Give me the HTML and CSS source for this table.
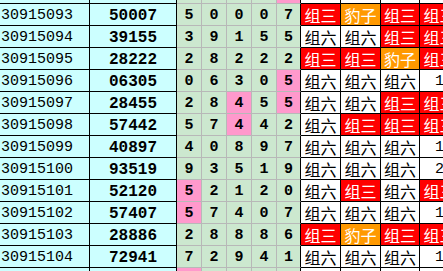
FILE: index.html
```html
<!DOCTYPE html>
<html lang="zh">
<head>
<meta charset="utf-8">
<link rel="stylesheet" href="styles.css">
</head>
<body>
<div class="sheet">
  <div class="row">
    <div class="c id"></div><div class="c sum"></div>
    <div class="c d"></div><div class="c d"></div><div class="c d"></div><div class="c d"></div><div class="c d d5 hit"></div>
    <div class="c g"></div><div class="c g"></div><div class="c g g3w"></div><div class="c g"></div>
  </div>
  <div class="row">
    <div class="c id">30915093</div><div class="c sum">50007</div>
    <div class="c d">5</div><div class="c d">0</div><div class="c d">0</div><div class="c d">0</div><div class="c d d5">7</div>
    <div class="c g red">组三</div><div class="c g orange">豹子</div><div class="c g g3w red">组三</div><div class="c g red">组三</div>
  </div>
  <div class="row">
    <div class="c id">30915094</div><div class="c sum">39155</div>
    <div class="c d">3</div><div class="c d">9</div><div class="c d">1</div><div class="c d">5</div><div class="c d d5">5</div>
    <div class="c g">组六</div><div class="c g">组六</div><div class="c g g3w red">组三</div><div class="c g red">组三</div>
  </div>
  <div class="row">
    <div class="c id">30915095</div><div class="c sum">28222</div>
    <div class="c d">2</div><div class="c d">8</div><div class="c d">2</div><div class="c d">2</div><div class="c d d5">2</div>
    <div class="c g red">组三</div><div class="c g red">组三</div><div class="c g g3w orange">豹子</div><div class="c g red">组三</div>
  </div>
  <div class="row">
    <div class="c id">30915096</div><div class="c sum">06305</div>
    <div class="c d">0</div><div class="c d">6</div><div class="c d">3</div><div class="c d">0</div><div class="c d d5 hit">5</div>
    <div class="c g">组六</div><div class="c g">组六</div><div class="c g g3w">组六</div><div class="c g num">1</div>
  </div>
  <div class="row">
    <div class="c id">30915097</div><div class="c sum">28455</div>
    <div class="c d">2</div><div class="c d">8</div><div class="c d hit">4</div><div class="c d">5</div><div class="c d d5 hit">5</div>
    <div class="c g">组六</div><div class="c g">组六</div><div class="c g g3w red">组三</div><div class="c g red">组三</div>
  </div>
  <div class="row">
    <div class="c id">30915098</div><div class="c sum">57442</div>
    <div class="c d">5</div><div class="c d">7</div><div class="c d hit">4</div><div class="c d">4</div><div class="c d d5">2</div>
    <div class="c g">组六</div><div class="c g red">组三</div><div class="c g g3w red">组三</div><div class="c g red">组三</div>
  </div>
  <div class="row">
    <div class="c id">30915099</div><div class="c sum">40897</div>
    <div class="c d">4</div><div class="c d">0</div><div class="c d">8</div><div class="c d">9</div><div class="c d d5">7</div>
    <div class="c g">组六</div><div class="c g">组六</div><div class="c g g3w">组六</div><div class="c g num">1</div>
  </div>
  <div class="row">
    <div class="c id">30915100</div><div class="c sum">93519</div>
    <div class="c d">9</div><div class="c d">3</div><div class="c d">5</div><div class="c d">1</div><div class="c d d5">9</div>
    <div class="c g">组六</div><div class="c g">组六</div><div class="c g g3w">组六</div><div class="c g num">2</div>
  </div>
  <div class="row">
    <div class="c id">30915101</div><div class="c sum">52120</div>
    <div class="c d hit">5</div><div class="c d">2</div><div class="c d">1</div><div class="c d">2</div><div class="c d d5">0</div>
    <div class="c g">组六</div><div class="c g red">组三</div><div class="c g g3w">组六</div><div class="c g red">组三</div>
  </div>
  <div class="row">
    <div class="c id">30915102</div><div class="c sum">57407</div>
    <div class="c d hit">5</div><div class="c d">7</div><div class="c d">4</div><div class="c d">0</div><div class="c d d5">7</div>
    <div class="c g">组六</div><div class="c g">组六</div><div class="c g g3w">组六</div><div class="c g num">1</div>
  </div>
  <div class="row">
    <div class="c id">30915103</div><div class="c sum">28886</div>
    <div class="c d">2</div><div class="c d">8</div><div class="c d">8</div><div class="c d">8</div><div class="c d d5">6</div>
    <div class="c g red">组三</div><div class="c g orange">豹子</div><div class="c g g3w red">组三</div><div class="c g red">组三</div>
  </div>
  <div class="row">
    <div class="c id">30915104</div><div class="c sum">72941</div>
    <div class="c d">7</div><div class="c d">2</div><div class="c d">9</div><div class="c d">4</div><div class="c d d5">1</div>
    <div class="c g">组六</div><div class="c g">组六</div><div class="c g g3w">组六</div><div class="c g num">1</div>
  </div>
  <div class="row">
    <div class="c id"></div><div class="c sum"></div>
    <div class="c d hit"></div><div class="c d"></div><div class="c d"></div><div class="c d"></div><div class="c d d5"></div>
    <div class="c g"></div><div class="c g"></div><div class="c g g3w"></div><div class="c g"></div>
  </div>
</div>
</body>
</html>
```

FILE: styles.css
```css
html, body {
  margin: 0;
  padding: 0;
  background: #ffffff;
  overflow: hidden;
}

.sheet {
  margin-top: -18px;
  display: flex;
  flex-direction: column;
  width: 460px;
}

.row {
  display: flex;
  height: 22px;
}

.c {
  box-sizing: border-box;
  height: 22px;
  flex: 0 0 auto;
  display: flex;
  align-items: center;
  justify-content: center;
  border-right: 1px solid #000;
  border-bottom: 1px solid #000;
  padding-top: 2px;
  line-height: 1;
  white-space: nowrap;
  overflow: hidden;
  color: #000;
}

.id {
  width: 90px;
  background: #ccffff;
  justify-content: flex-start;
  padding-left: 1px;
  font-family: "Liberation Mono", monospace;
  font-size: 15px;
}

.sum {
  width: 87px;
  background: #ccffff;
  font-family: "Liberation Mono", monospace;
  font-weight: bold;
  font-size: 16px;
}

.d {
  width: 25px;
  background: #cce8cf;
  border-right-color: #b8b8b8;
  border-bottom-color: #b8b8b8;
  font-family: "Liberation Mono", monospace;
  font-weight: bold;
  font-size: 15px;
}

.d5 {
  width: 24px;
  border-right-color: #000;
}

.hit {
  background: #ff99cc;
}

.g {
  width: 40px;
  background: #ffffff;
  font-family: "Noto Sans CJK SC", sans-serif;
  font-size: 16px;
  padding-top: 0;
}

.g3w {
  width: 39px;
}

.red {
  background: #ff0000;
  color: #ffffff;
}

.orange {
  background: #ff9900;
  color: #ffffff;
}

.num {
  font-family: "Liberation Mono", monospace;
  font-size: 15px;
  padding-top: 2px;
}
```
